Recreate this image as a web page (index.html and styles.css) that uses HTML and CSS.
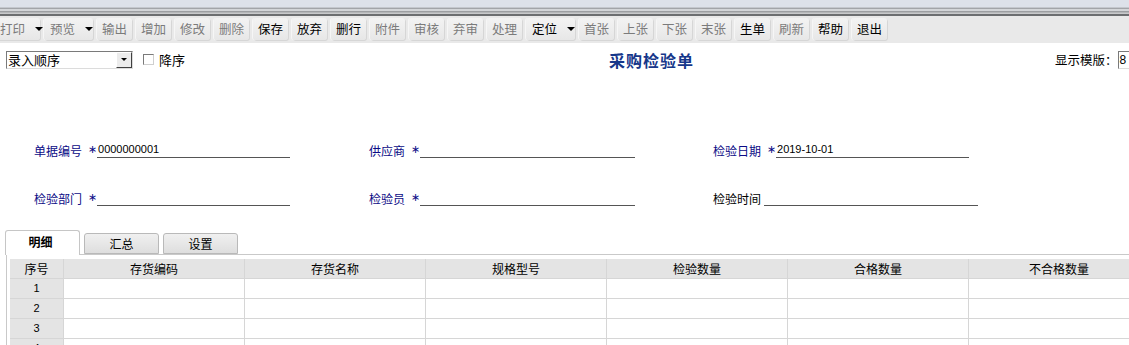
FILE: index.html
```html
<!DOCTYPE html>
<html lang="zh-CN">
<head>
<meta charset="utf-8">
<title>采购检验单</title>
<link rel="stylesheet" href="styles.css">
</head>
<body>
<div class="topbar"></div>
<div class="toolbar">
  <div class="btn dd first dis"><span>打印</span><span class="tri"></span></div>
  <div class="btn dd dis"><span>预览</span><span class="tri"></span></div>
  <div class="btn dis">输出</div>
  <div class="btn dis">增加</div>
  <div class="btn dis">修改</div>
  <div class="btn dis">删除</div>
  <div class="btn">保存</div>
  <div class="btn">放弃</div>
  <div class="btn">删行</div>
  <div class="btn dis">附件</div>
  <div class="btn dis">审核</div>
  <div class="btn dis">弃审</div>
  <div class="btn dis">处理</div>
  <div class="btn dd"><span>定位</span><span class="tri"></span></div>
  <div class="btn dis">首张</div>
  <div class="btn dis">上张</div>
  <div class="btn dis">下张</div>
  <div class="btn dis">末张</div>
  <div class="btn">生单</div>
  <div class="btn dis">刷新</div>
  <div class="btn">帮助</div>
  <div class="btn">退出</div>
</div>

<div class="optbar">
  <div class="select">
    <span class="select-text">录入顺序</span>
    <span class="select-btn"><span class="tri"></span></span>
  </div>
  <span class="check"></span>
  <span class="check-label">降序</span>
  <h1 class="title">采购检验单</h1>
  <span class="tpl-label">显示模版：</span>
  <span class="tpl-input">8</span>
</div>

<div class="form">
  <div class="field">
    <span class="lbl req">单据编号</span><span class="star">∗</span>
    <span class="line w193">0000000001</span>
  </div>
  <div class="field">
    <span class="lbl req">供应商</span><span class="star">∗</span>
    <span class="line w215"></span>
  </div>
  <div class="field">
    <span class="lbl req">检验日期</span><span class="star">∗</span>
    <span class="line w193">2019-10-01</span>
  </div>
  <div class="field">
    <span class="lbl req">检验部门</span><span class="star">∗</span>
    <span class="line w193"></span>
  </div>
  <div class="field">
    <span class="lbl req">检验员</span><span class="star">∗</span>
    <span class="line w215"></span>
  </div>
  <div class="field">
    <span class="lbl plain">检验时间</span>
    <span class="line w214"></span>
  </div>
</div>

<div class="tabs">
  <div class="tab active">明细</div>
  <div class="tab">汇总</div>
  <div class="tab">设置</div>
</div>
<div class="panel">
  <div class="grid">
    <div class="row head">
      <div class="cell num">序号</div>
      <div class="cell">存货编码</div>
      <div class="cell">存货名称</div>
      <div class="cell">规格型号</div>
      <div class="cell">检验数量</div>
      <div class="cell">合格数量</div>
      <div class="cell">不合格数量</div>
    </div>
    <div class="row">
      <div class="cell num digit">1</div><div class="cell"></div><div class="cell"></div><div class="cell"></div><div class="cell"></div><div class="cell"></div><div class="cell"></div>
    </div>
    <div class="row">
      <div class="cell num digit">2</div><div class="cell"></div><div class="cell"></div><div class="cell"></div><div class="cell"></div><div class="cell"></div><div class="cell"></div>
    </div>
    <div class="row">
      <div class="cell num digit">3</div><div class="cell"></div><div class="cell"></div><div class="cell"></div><div class="cell"></div><div class="cell"></div><div class="cell"></div>
    </div>
    <div class="row">
      <div class="cell num digit">4</div><div class="cell"></div><div class="cell"></div><div class="cell"></div><div class="cell"></div><div class="cell"></div><div class="cell"></div>
    </div>
  </div>
</div>
</body>
</html>
```

FILE: styles.css
```css
* { box-sizing: border-box; }
html, body { margin: 0; padding: 0; }
body {
  width: 1129px;
  height: 345px;
  overflow: hidden;
  background: #fff;
  color: #000;
  font-family: "Noto Sans CJK SC", "Liberation Sans", sans-serif;
  font-size: 12px;
}

.topbar {
  height: 16px;
  background: linear-gradient(to bottom,
    #dde1e9 0, #dde1e9 7px,
    #c4c7cd 7px, #c4c7cd 8px,
    #a2a4a8 8px, #a2a4a8 9px,
    #d3d5d8 9px, #d3d5d8 11px,
    #9c9ea1 11px, #9c9ea1 12px,
    #b4b6b8 12px, #b4b6b8 13px,
    #c8c9cb 13px, #c8c9cb 14px,
    #6c6e70 14px, #6c6e70 16px);
}

.toolbar {
  height: 27px;
  background: #e9e9e9;
  display: flex;
  gap: 4px;
  padding-top: 2px;
  white-space: nowrap;
}
.btn {
  flex: none;
  width: 35px;
  height: 22px;
  line-height: 22px;
  text-align: center;
  border-radius: 3px;
  background: linear-gradient(to bottom, #f3f3f3, #e7e7e7);
  box-shadow: 1px 1px 0 #d6d6d6, -1px 0 0 #f6f6f6;
  color: #000;
  font-size: 12.5px;
}
.btn.dis { color: #7b7b7b; }
.btn.dd {
  width: 49px;
  display: flex;
  align-items: center;
  justify-content: flex-start;
  padding-left: 6px;
  gap: 10px;
}
.btn.first { margin-left: -9px; padding-left: 9px; }
.tri {
  display: inline-block;
  width: 0;
  height: 0;
  border-left: 4px solid transparent;
  border-right: 4px solid transparent;
  border-top: 4px solid #000;
}

.optbar {
  display: flex;
  align-items: center;
  height: 27px;
  padding: 6px 0 0 6px;
  white-space: nowrap;
}
.optbar > * { flex: none; }
.select {
  width: 127px;
  height: 18px;
  display: flex;
  border: 1px solid #7a7a7a;
  border-right-color: #dcdcdc;
  border-bottom-color: #dcdcdc;
  background: #fff;
}
.select-text {
  flex: 1;
  line-height: 16px;
  font-size: 13px;
  padding-left: 1px;
}
.select-btn {
  width: 16px;
  height: 16px;
  background: #ececec;
  border: 1px solid;
  border-color: #fff #404040 #404040 #fff;
  display: flex;
  align-items: center;
  justify-content: center;
}
.select-btn .tri { border-left-width: 3px; border-right-width: 3px; border-top-width: 3px; }
.check {
  width: 11px;
  height: 11px;
  margin-left: 10px;
  border: 1px solid #7a7a7a;
  border-right-color: #cfcfcf;
  border-bottom-color: #cfcfcf;
  background: #fff;
}
.check-label { margin-left: 5px; font-size: 13px; }
.title {
  margin: 0 0 0 424px;
  font-size: 16px;
  font-weight: bold;
  color: #16378a;
  line-height: 20px;
  letter-spacing: 1px;
}
.tpl-label { margin-left: 361px; font-size: 12.5px; }
.tpl-input {
  margin-left: 0;
  width: 20px;
  height: 18px;
  border: 1px solid #7a7a7a;
  border-right: none;
  border-bottom-color: #dcdcdc;
  line-height: 16px;
  font-family: "Liberation Sans", sans-serif;
  font-size: 12px;
  padding-left: 1px;
}

.form {
  margin-top: 68px;
  padding-left: 34px;
  display: grid;
  grid-template-columns: 335px 344px auto;
  row-gap: 28px;
}
.field {
  display: flex;
  align-items: flex-end;
  height: 20px;
}
.lbl {
  line-height: 15px;
  font-size: 12px;
}
.lbl.req { color: #0b0b86; }
.lbl.plain { color: #000; margin-right: 3px; }
.star {
  color: #0b0b86;
  font-family: "DejaVu Sans", sans-serif;
  font-size: 11px;
  width: 6px;
  margin: 0 3px 0 6px;
  line-height: 14px;
  align-self: center;
  padding-top: 4px;
}
.line {
  height: 17px;
  border-bottom: 1px solid #555;
  font-family: "Liberation Sans", sans-serif;
  font-size: 11px;
  line-height: 12px;
  padding-left: 1px;
  padding-top: 2px;
}
.w193 { width: 193px; }
.w214 { width: 214px; }
.w215 { width: 215px; }

.tabs {
  margin-top: 23px;
  padding-left: 5px;
  display: flex;
  align-items: flex-end;
  height: 25px;
  gap: 4px;
  position: relative;
  z-index: 1;
}
.tab {
  width: 75px;
  height: 21px;
  border: 1px solid #b9b9b9;
  border-radius: 3px 3px 0 0;
  background: linear-gradient(to bottom, #f0f0f0, #dedede);
  text-align: center;
  line-height: 20px;
  font-size: 12px;
}
.tab.active {
  height: 25px;
  margin-bottom: -1px;
  background: #fff;
  border-color: #c6c6c6;
  border-bottom: none;
  font-weight: bold;
  line-height: 22px;
  padding-right: 4px;
}

.panel {
  margin-left: 6px;
  border-top: 1px solid #c9c9c9;
  border-left: 1px solid #c9c9c9;
  padding: 4px 0 0 3px;
}
.grid { width: 1140px; }
.row {
  display: grid;
  grid-template-columns: 54px repeat(6, 181px);
  height: 20px;
}
.cell {
  border-right: 1px solid #d6d6d6;
  border-bottom: 1px solid #d6d6d6;
  text-align: center;
  line-height: 19px;
  font-size: 12px;
}
.head .cell { background: #e4e4e4; }
.cell.num { background: #e4e4e4; }
.cell.digit {
  font-family: "Liberation Sans", sans-serif;
  font-size: 11px;
}
```
